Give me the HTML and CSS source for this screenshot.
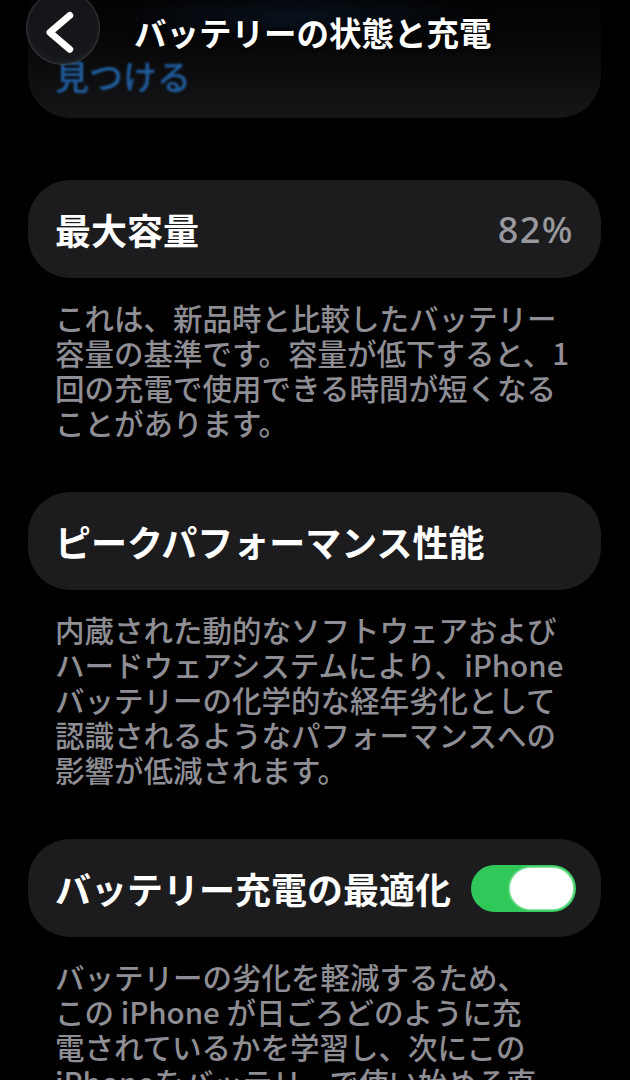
FILE: index.html
```html
<!DOCTYPE html>
<html lang="ja">
<head>
<meta charset="utf-8">
<title>バッテリーの状態と充電</title>
<link rel="stylesheet" href="styles.css">
</head>
<body>
<header class="nav">
  <button class="back" aria-label="戻る">
    <svg viewBox="0 0 74 74" width="74" height="74"><path d="M44 24 L23.5 41.5 L44 59" fill="none" stroke="#fff" stroke-width="7" stroke-linecap="round" stroke-linejoin="round"/></svg>
  </button>
  <h1 class="nav-title">バッテリーの状態と充電</h1>
</header>
<main class="list">
  <section class="card card-top">
    <p class="link">見つける</p>
  </section>

  <div class="card row">
    <span class="label">最大容量</span>
    <span class="value">82%</span>
  </div>
  <p class="note">これは、新品時と比較したバッテリー<br>容量の基準です。容量が低下すると、1<br>回の充電で使用できる時間が短くなる<br>ことがあります。</p>

  <div class="card row">
    <span class="label">ピークパフォーマンス性能</span>
  </div>
  <p class="note">内蔵された動的なソフトウェアおよび<br>ハードウェアシステムにより、iPhone<br>バッテリーの化学的な経年劣化として<br>認識されるようなパフォーマンスへの<br>影響が低減されます。</p>

  <div class="card row">
    <span class="label">バッテリー充電の最適化</span>
    <span class="toggle on"><span class="knob"></span></span>
  </div>
  <p class="note">バッテリーの劣化を軽減するため、<br>この iPhone が日ごろどのように充<br>電されているかを学習し、次にこの<br>iPhoneをバッテリーで使い始める直</p>
</main>
</body>
</html>
```
FILE: styles.css
```css
* { box-sizing: border-box; }

body {
  margin: 0;
  background: #000;
  font-family: "Noto Sans CJK JP", "Noto Sans", sans-serif;
  color: #fff;
  overflow: hidden;
  height: 1080px;
}

.nav {
  position: absolute;
  top: 0;
  left: 0;
  right: 0;
  height: 70px;
  z-index: 2;
}

.back {
  position: absolute;
  left: 26px;
  top: -9px;
  width: 74px;
  height: 74px;
  padding: 0;
  border-radius: 50%;
  border: 1.5px solid rgba(255, 255, 255, 0.14);
  background: rgba(24, 26, 30, 0.8);
  box-shadow: inset 0 -2px 6px rgba(255, 255, 255, 0.05);
  display: flex;
  align-items: center;
  justify-content: center;
}

.back svg { display: block; }

.nav-title {
  position: absolute;
  left: 134px;
  top: 11px;
  margin: 0;
  font-size: 32.5px;
  line-height: 42px;
  font-weight: 700;
  color: #fff;
  white-space: nowrap;
  text-shadow: 0 0 6px rgba(0, 0, 0, 0.9);
}

.list {
  display: flex;
  flex-direction: column;
  padding: 0 29px 0 28px;
}

.card {
  background: #1c1c1e;
  border-radius: 42px;
}

.card-top {
  margin-top: -40px;
  height: 158px;
  padding: 95px 27px 0;
  background:
    radial-gradient(ellipse 190px 26px at 270px 58px, rgba(30, 80, 140, 0.18), rgba(30, 80, 140, 0) 100%),
    linear-gradient(to bottom, #000 0%, #050506 45%, #0e0e10 75%, #161618 100%);
  overflow: hidden;
}

.link {
  margin: 0;
  font-size: 34px;
  line-height: 42px;
  font-weight: 500;
  color: #215fa2;
  white-space: nowrap;
  filter: blur(0.8px);
}

.row {
  display: flex;
  align-items: center;
  justify-content: space-between;
  height: 98px;
  padding: 0 25px 0 27px;
}

.list .card-top + .row { margin-top: 62px; }

.label {
  font-size: 36px;
  font-weight: 600;
  color: #fff;
  white-space: nowrap;
}

.value {
  font-family: "Noto Sans", sans-serif;
  font-size: 36px;
  font-weight: 500;
  letter-spacing: 1.5px;
  color: #98989e;
  margin-right: 2px;
}

.note {
  margin: 22px 0 52px;
  padding: 0 27px;
  font-size: 29.5px;
  line-height: 35px;
  font-weight: 500;
  color: #8e8e94;
  white-space: nowrap;
}

.toggle {
  display: flex;
  align-items: center;
  justify-content: flex-end;
  width: 105px;
  height: 47px;
  padding: 3px;
  border-radius: 24px;
  background: #31c85a;
}

.knob {
  width: 63px;
  height: 41px;
  border-radius: 21px;
  background: #fff;
  box-shadow: 0 0 2px 1px rgba(230, 255, 235, 0.7);
}
```
